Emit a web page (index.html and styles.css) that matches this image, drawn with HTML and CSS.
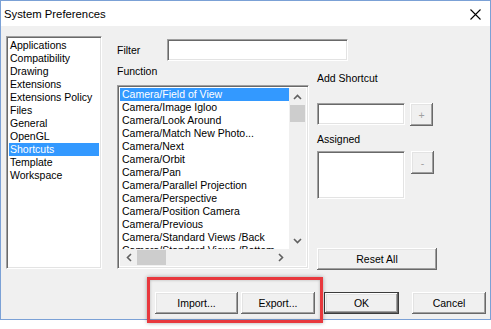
FILE: index.html
```html
<!DOCTYPE html>
<html lang="en">
<head>
    <meta charset="UTF-8">
    <title>System Preferences</title>
    <link rel="stylesheet" href="styles.css">
</head>
<body>
    <div class="page">
        <div class="window">
            <div class="titlebar">
                <span class="title">System Preferences</span>
                <svg class="close" width="11" height="11" viewBox="0 0 11 11">
                    <path d="M0.5 0.5 L10.5 10.5 M10.5 0.5 L0.5 10.5" stroke="#000" stroke-width="1.1" fill="none"/>
                </svg>
            </div>

            <div class="main">
                <!-- Preference pages -->
                <div class="pref-list sunken">
                    <div class="item">Applications</div>
                    <div class="item">Compatibility</div>
                    <div class="item">Drawing</div>
                    <div class="item">Extensions</div>
                    <div class="item">Extensions Policy</div>
                    <div class="item">Files</div>
                    <div class="item">General</div>
                    <div class="item">OpenGL</div>
                    <div class="item selected">Shortcuts</div>
                    <div class="item">Template</div>
                    <div class="item">Workspace</div>
                </div>

                <div class="center">
                    <div class="filter-row">
                        <span class="label filter-label">Filter</span>
                        <div class="field filter-field sunken"></div>
                    </div>

                    <div class="lower">
                        <div class="func-col">
                            <div class="label func-label">Function</div>
                            <div class="func-list sunken">
                                <div class="rows">
                                    <div class="row selected">Camera/Field of View</div>
                                    <div class="row">Camera/Image Igloo</div>
                                    <div class="row">Camera/Look Around</div>
                                    <div class="row">Camera/Match New Photo...</div>
                                    <div class="row">Camera/Next</div>
                                    <div class="row">Camera/Orbit</div>
                                    <div class="row">Camera/Pan</div>
                                    <div class="row">Camera/Parallel Projection</div>
                                    <div class="row">Camera/Perspective</div>
                                    <div class="row">Camera/Position Camera</div>
                                    <div class="row">Camera/Previous</div>
                                    <div class="row">Camera/Standard Views /Back</div>
                                    <div class="row">Camera/Standard Views /Bottom</div>
                                </div>
                                <div class="vscroll">
                                    <div class="arrow">
                                        <svg width="9" height="6" viewBox="0 0 9 6"><path d="M1 5 L4.5 1.5 L8 5" stroke="#606060" stroke-width="1.6" fill="none"/></svg>
                                    </div>
                                    <div class="vthumb"></div>
                                    <div class="track"></div>
                                    <div class="arrow">
                                        <svg width="9" height="6" viewBox="0 0 9 6"><path d="M1 1 L4.5 4.5 L8 1" stroke="#606060" stroke-width="1.6" fill="none"/></svg>
                                    </div>
                                </div>
                                <div class="hscroll">
                                    <div class="arrow">
                                        <svg width="6" height="9" viewBox="0 0 6 9"><path d="M5 1 L1.5 4.5 L5 8" stroke="#606060" stroke-width="1.6" fill="none"/></svg>
                                    </div>
                                    <div class="hthumb"></div>
                                    <div class="track"></div>
                                    <div class="arrow">
                                        <svg width="6" height="9" viewBox="0 0 6 9"><path d="M1 1 L4.5 4.5 L1 8" stroke="#606060" stroke-width="1.6" fill="none"/></svg>
                                    </div>
                                </div>
                                <div class="corner"></div>
                            </div>
                        </div>

                        <div class="side">
                            <div class="label add-label">Add Shortcut</div>
                            <div class="shortcut-row">
                                <div class="field key-field sunken"></div>
                                <button class="btn small disabled">+</button>
                            </div>
                            <div class="label assigned-label">Assigned</div>
                            <div class="assigned-row">
                                <div class="field assigned-box sunken"></div>
                                <button class="btn small disabled">-</button>
                            </div>
                            <button class="btn reset">Reset All</button>
                        </div>
                    </div>
                </div>
            </div>

            <div class="footer">
                <button class="btn import">Import...</button>
                <button class="btn export">Export...</button>
                <button class="btn ok default">OK</button>
                <button class="btn cancel">Cancel</button>
            </div>
        </div>

        <!-- annotation frame over the import/export buttons -->
        <div class="highlight"></div>
    </div>
</body>
</html>
```

FILE: styles.css
```css
* {
    margin: 0;
    padding: 0;
    box-sizing: border-box;
}

body {
    background: #fff;
    font-family: 'Liberation Sans', Arial, sans-serif;
    font-size: 10.5px;
    color: #000;
}

.page {
    position: relative;
    width: 491px;
    height: 329px;
}

.window {
    width: 491px;
    height: 320px;
    border: 1px solid #7ba1d6;
    background: #f0f0f0;
    display: flex;
    flex-direction: column;
}

.titlebar {
    height: 25px;
    background: #fff;
    display: flex;
    align-items: center;
    justify-content: space-between;
    padding: 0 9px 0 3px;
}

.title {
    font-size: 11.3px;
    color: #000;
    padding-top: 1px;
}

.close {
    display: block;
    margin-top: 1px;
}

/* 3D sunken frame, windows classic */
.sunken {
    background: #fff;
    border-top: 1px solid #a0a0a0;
    border-left: 1px solid #a0a0a0;
    border-right: 1px solid #fff;
    border-bottom: 1px solid #fff;
    box-shadow: inset 1px 1px 0 #696969, inset -1px -1px 0 #e3e3e3;
}

.main {
    display: flex;
    padding: 10px 0 0 5px;
}

.pref-list {
    width: 96px;
    height: 233px;
    padding: 2px 2px 0 2px;
}

.item {
    height: 13px;
    line-height: 13px;
    padding-left: 1px;
    white-space: nowrap;
}

.item.selected,
.row.selected {
    background: #3399ff;
    color: #fff;
}

.center {
    margin-left: 15px;
    display: flex;
    flex-direction: column;
}

.label {
    line-height: 13px;
    white-space: nowrap;
}

.filter-row {
    margin-top: 3px;
    height: 22px;
    display: flex;
    align-items: center;
}

.filter-label {
    width: 50px;
}

.filter-field {
    width: 181px;
    height: 22px;
}

.lower {
    display: flex;
}

.func-label {
    margin-top: 4px;
}

.func-list {
    margin-top: 7px;
    width: 192px;
    height: 184px;
    padding: 2px;
    display: grid;
    grid-template-columns: 1fr 17px;
    grid-template-rows: 1fr 17px;
}

.rows {
    overflow: hidden;
}

.row {
    height: 13px;
    line-height: 13px;
    padding-left: 2px;
    white-space: nowrap;
}

.vscroll,
.hscroll {
    background: #f0f0f0;
    display: flex;
}

.vscroll {
    flex-direction: column;
}

.arrow {
    width: 17px;
    height: 17px;
    display: flex;
    align-items: center;
    justify-content: center;
}

.track {
    flex: 1;
}

.vthumb {
    height: 17px;
    margin: 0 1px;
    background: #cdcdcd;
}

.hthumb {
    width: 29px;
    margin: 1px 0;
    background: #cdcdcd;
}

.corner {
    background: #f0f0f0;
}

.side {
    margin-left: 8px;
    width: 121px;
    display: flex;
    flex-direction: column;
}

.add-label {
    margin-top: 11px;
}

.shortcut-row {
    margin-top: 18px;
    display: flex;
}

.key-field {
    width: 88px;
    height: 22px;
}

.assigned-label {
    margin-top: 7px;
}

.assigned-row {
    margin-top: 5px;
    display: flex;
}

.assigned-box {
    width: 88px;
    height: 48px;
}

/* raised push button */
.btn {
    font-family: 'Liberation Sans', Arial, sans-serif;
    font-size: 10.5px;
    color: #000;
    background: #f0f0f0;
    border: none;
    height: 22px;
    box-shadow: inset -1px -1px 0 #696969, inset 1px 1px 0 #fff, inset -2px -2px 0 #a0a0a0, inset 2px 2px 0 #e3e3e3;
}

.btn.small {
    width: 23px;
    height: 23px;
    margin-left: 5px;
}

.assigned-row .btn.small {
    margin-left: 6px;
}

.btn.disabled {
    color: #a0a0a0;
}

.btn.reset {
    margin-top: 49px;
    width: 120px;
}

.footer {
    margin-top: auto;
    display: flex;
    justify-content: flex-end;
    padding: 0 4px 5px 0;
}

.import {
    width: 83px;
}

.export {
    width: 74px;
    margin-left: 3px;
}

.ok {
    width: 75px;
    margin-left: 9px;
}

.cancel {
    width: 74px;
    margin-left: 13px;
}

.btn.default {
    border: 1px solid #3c3c3c;
}

.highlight {
    position: absolute;
    left: 147px;
    top: 277px;
    width: 176px;
    height: 46px;
    border: 3px solid #e8383d;
    box-shadow: 0 0 4px rgba(0, 0, 0, 0.35), inset 0 0 3px rgba(0, 0, 0, 0.25);
}
```
